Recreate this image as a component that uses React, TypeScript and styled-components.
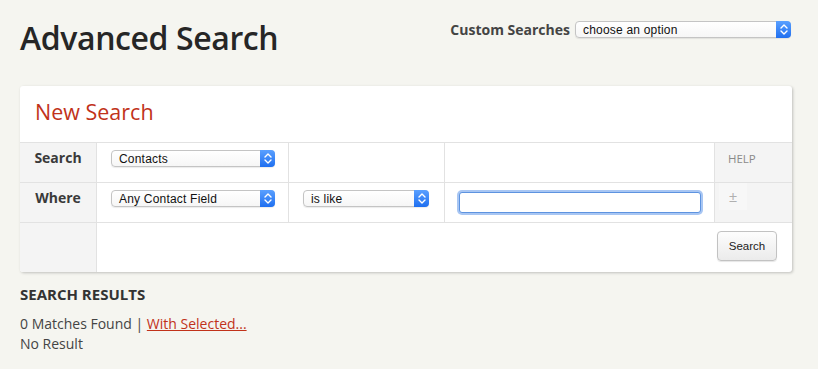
import styled, { createGlobalStyle } from "styled-components";

const GlobalStyle = createGlobalStyle`
  html, body {
    margin: 0;
    padding: 0;
    background: #f5f5f0;
  }
  body {
    font-family: "Open Sans", "Liberation Sans", sans-serif;
    color: #333;
  }
`;

function Arrows() {
  return (
    <ArrowBtn>
      <svg width="8" height="11" viewBox="0 0 8 11">
        <path d="M1 4 L4 1 L7 4 M1 7 L4 10 L7 7" fill="none" stroke="#fff" strokeWidth="1.4" strokeLinecap="round" strokeLinejoin="round" />
      </svg>
    </ArrowBtn>
  );
}

function MacSelect({ value, width }: { value: string; width: number }) {
  return (
    <SelectWrap $width={width}>
      <SelectText>{value}</SelectText>
      <Arrows />
    </SelectWrap>
  );
}

export default function App() {
  return (
    <Page>
      <GlobalStyle />
      <TopBar>
        <Title>Advanced Search</Title>
        <CustomBox>
          <CustomLabel>Custom Searches</CustomLabel>
          <MacSelect value="choose an option" width={216} />
        </CustomBox>
      </TopBar>

      <Card>
        <CardTitle>New Search</CardTitle>
        <Grid>
          <LabelCell>Search</LabelCell>
          <Cell>
            <MacSelect value="Contacts" width={164} />
          </Cell>
          <Cell />
          <Cell />
          <SideCell>
            <Help>HELP</Help>
          </SideCell>

          <LabelCell>Where</LabelCell>
          <Cell>
            <MacSelect value="Any Contact Field" width={164} />
          </Cell>
          <Cell>
            <MacSelect value="is like" width={126} />
          </Cell>
          <Cell>
            <TextInput type="text" />
          </Cell>
          <SideCell>
            <PlusMinus>±</PlusMinus>
          </SideCell>

          <LabelCell $last />
          <FooterCell>
            <SearchButton>Search</SearchButton>
          </FooterCell>
        </Grid>
      </Card>

      <Results>
        <ResultsTitle>SEARCH RESULTS</ResultsTitle>
        <ResultLine>
          0 Matches Found | <ResultLink href="#">With Selected...</ResultLink>
        </ResultLine>
        <ResultLine>No Result</ResultLine>
      </Results>
    </Page>
  );
}

const Page = styled.div`
  width: 772px;
  padding: 0 20px;
`;

const TopBar = styled.div`
  display: flex;
  justify-content: space-between;
  align-items: flex-start;
  height: 86px;
`;

const Title = styled.h1`
  margin: 16px 0 0;
  font-size: 32px;
  font-weight: 600;
  color: #262626;
  letter-spacing: -0.4px;
  line-height: 44px;
`;

const CustomBox = styled.div`
  display: flex;
  align-items: center;
  gap: 5px;
  margin-top: 20px;
  margin-right: 1px;
`;

const CustomLabel = styled.span`
  font-size: 14px;
  font-weight: 700;
  color: #444;
`;

const SelectWrap = styled.div<{ $width: number }>`
  position: relative;
  width: ${(p) => p.$width}px;
  height: 17px;
  box-sizing: border-box;
  border: 1px solid #c4c4c4;
  border-radius: 4px;
  background: linear-gradient(#ffffff, #f6f6f6);
  box-shadow: 0 1px 1px rgba(0, 0, 0, 0.08);
  display: flex;
  align-items: center;
`;

const SelectText = styled.span`
  font-family: "Liberation Sans", Arial, sans-serif;
  font-size: 12px;
  color: #111;
  padding-left: 7px;
  letter-spacing: 0.2px;
`;

const ArrowBtn = styled.span`
  position: absolute;
  top: -1px;
  right: -1px;
  width: 15px;
  height: 17px;
  border-radius: 0 4px 4px 0;
  background: linear-gradient(#5aa0ff, #1f6ff0);
  display: flex;
  align-items: center;
  justify-content: center;
`;

const Card = styled.div`
  background: #fff;
  border-radius: 3px;
  box-shadow: 1px 1px 3px rgba(0, 0, 0, 0.22);
`;

const CardTitle = styled.h2`
  margin: 0;
  height: 57px;
  box-sizing: border-box;
  padding: 10px 15px 0;
  font-size: 21.5px;
  font-weight: 400;
  color: #c1321a;
  line-height: 32px;
  border-bottom: 1px solid #e2e2e2;
`;

const Grid = styled.div`
  display: grid;
  grid-template-columns: 77px 192px 156px 270px 77px;
  grid-template-rows: 40px 40px 49px;
`;

const LabelCell = styled.div<{ $last?: boolean }>`
  background: #f4f4f4;
  border-right: 1px solid #e2e2e2;
  border-bottom: ${(p) => (p.$last ? "none" : "1px solid #e2e2e2")};
  border-radius: ${(p) => (p.$last ? "0 0 0 3px" : "0")};
  text-align: center;
  font-size: 14px;
  font-weight: 700;
  color: #3a3a3a;
  padding-top: 5px;
  box-sizing: border-box;
`;

const Cell = styled.div`
  border-right: 1px solid #e2e2e2;
  border-bottom: 1px solid #e2e2e2;
  padding: 7px 0 0 14px;
  box-sizing: border-box;
`;

const SideCell = styled.div`
  background: #f4f4f4;
  border-bottom: 1px solid #e2e2e2;
  box-sizing: border-box;
`;

const Help = styled.div`
  font-size: 11.5px;
  color: #8a8a8a;
  padding: 8px 0 0 13px;
`;

const PlusMinus = styled.div`
  width: 28px;
  height: 27px;
  margin-left: 4px;
  background: #f7f7f7;
  color: #b0b0b0;
  font-size: 15px;
  display: flex;
  align-items: center;
  justify-content: center;
  line-height: 1;
`;

const TextInput = styled.input`
  width: 242px;
  height: 21px;
  box-sizing: border-box;
  border: 1px solid #5d93e0;
  border-radius: 3px;
  box-shadow: 0 0 0 2px #a8c6f3;
  outline: none;
  margin: 1px 0 0 0;
  padding: 0 4px;
`;

const FooterCell = styled.div`
  grid-column: 2 / 6;
  display: flex;
  justify-content: flex-end;
  align-items: flex-start;
  padding: 8px 15px 0 0;
`;

const SearchButton = styled.button`
  width: 60px;
  height: 30px;
  border: 1px solid #c2c2c2;
  border-radius: 4px;
  background: linear-gradient(#fdfdfd, #ebebeb);
  box-shadow: 0 1px 1px rgba(0, 0, 0, 0.1);
  font-family: "Liberation Sans", Arial, sans-serif;
  font-size: 11.5px;
  color: #222;
  padding: 0;
`;

const Results = styled.div`
  padding-top: 12px;
`;

const ResultsTitle = styled.h3`
  margin: 0 0 10px;
  font-size: 15px;
  font-weight: 700;
  color: #333;
  line-height: 20px;
`;

const ResultLine = styled.div`
  font-size: 14px;
  color: #444;
  line-height: 20px;
`;

const ResultLink = styled.a`
  color: #c1321a;
  text-decoration: underline;
`;
